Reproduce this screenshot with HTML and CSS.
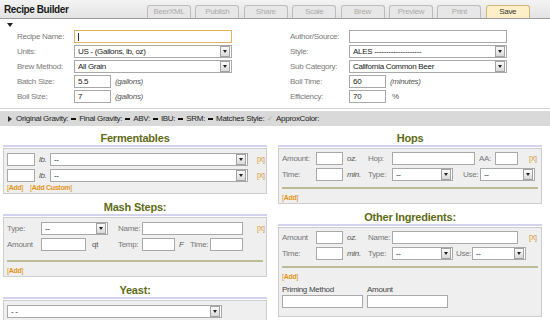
FILE: index.html
```html
<!DOCTYPE html>
<html lang="en">
<head>
    <meta charset="UTF-8">
    <title>Recipe Builder</title>
    <link rel="stylesheet" href="styles.css">
</head>
<body>
    <!-- Title bar and tabs -->
    <div class="topbar">
        <h1>Recipe Builder</h1>
        <ul class="tabs">
            <li>BeerXML</li>
            <li>Publish</li>
            <li>Share</li>
            <li>Scale</li>
            <li>Brew</li>
            <li>Preview</li>
            <li>Print</li>
            <li class="save">Save</li>
        </ul>
    </div>

    <!-- General recipe info -->
    <div class="general">
        <span class="toggle"></span>
        <div class="fields">
            <div class="col">
                <div class="row"><label>Recipe Name:</label><span class="fld wide focus"><span class="caret"></span></span></div>
                <div class="row"><label>Units:</label><div class="select wide"><span class="val">US - (Gallons, lb, oz)</span><span class="arrow"></span></div></div>
                <div class="row"><label>Brew Method:</label><div class="select wide"><span class="val">All Grain</span><span class="arrow"></span></div></div>
                <div class="row"><label>Batch Size:</label><span class="fld short">5.5</span><span class="unit">(gallons)</span></div>
                <div class="row"><label>Boil Size:</label><span class="fld short">7</span><span class="unit">(gallons)</span></div>
            </div>
            <div class="col right">
                <div class="row"><label>Author/Source:</label><span class="fld wide"></span></div>
                <div class="row"><label>Style:</label><div class="select wide"><span class="val">ALES --------------------</span><span class="arrow"></span></div></div>
                <div class="row"><label>Sub Category:</label><div class="select wide"><span class="val">California Common Beer</span><span class="arrow"></span></div></div>
                <div class="row"><label>Boil Time:</label><span class="fld short">60</span><span class="unit">(minutes)</span></div>
                <div class="row"><label>Efficiency:</label><span class="fld short">70</span><span class="unit plain">%</span></div>
            </div>
        </div>
    </div>

    <!-- Calculated stats -->
    <div class="stats">
        <span class="play"></span>
        Original Gravity: <span class="dash"></span>
        Final Gravity: <span class="dash"></span>
        ABV: <span class="dash"></span>
        IBU: <span class="dash"></span>
        SRM: <span class="dash"></span>
        Matches Style: <span class="check">&#10003;</span>
        ApproxColor:
    </div>

    <div class="sections">
        <div class="column">
            <div class="section">
                <h2>Fermentables</h2>
                <div class="box">
                    <div class="line">
                        <span class="fld w28"></span><span class="unit w15">lb.</span>
                        <div class="select w198"><span class="val">--</span><span class="arrow"></span></div>
                        <span class="del ml9">[X]</span>
                    </div>
                    <div class="line last">
                        <span class="fld w28"></span><span class="unit w15">lb.</span>
                        <div class="select w198"><span class="val">--</span><span class="arrow"></span></div>
                        <span class="del ml9">[X]</span>
                    </div>
                    <div class="actions"><a>[<b>Add</b>]</a><a>[<b>Add Custom</b>]</a></div>
                </div>
            </div>

            <div class="section">
                <h2>Mash Steps:</h2>
                <div class="box">
                    <div class="line">
                        <label class="w34">Type:</label>
                        <div class="select w67"><span class="val">--</span><span class="arrow"></span></div>
                        <label class="w24 ml10">Name:</label>
                        <span class="fld w101"></span>
                        <span class="del ml14">[X]</span>
                    </div>
                    <div class="line last">
                        <label class="w34">Amount</label>
                        <span class="fld w45"></span>
                        <span class="unit plain w32">qt</span>
                        <label class="w24">Temp:</label>
                        <span class="fld w33"></span>
                        <span class="unit w15">F</span>
                        <label class="w20">Time:</label>
                        <span class="fld w33"></span>
                    </div>
                    <div class="rule tall"></div>
                    <div class="actions"><a>[<b>Add</b>]</a></div>
                </div>
            </div>

            <div class="section">
                <h2>Yeast:</h2>
                <div class="box">
                    <div class="line">
                        <div class="select w215"><span class="val">- -</span><span class="arrow"></span></div>
                    </div>
                    <div class="line"></div>
                </div>
            </div>
        </div>

        <div class="column">
            <div class="section">
                <h2>Hops</h2>
                <div class="box tight">
                    <div class="line">
                        <label class="w34">Amount:</label>
                        <span class="fld w27"></span>
                        <span class="unit w25">oz.</span>
                        <label class="w24">Hop:</label>
                        <span class="fld w83"></span>
                        <label class="w20 pl4">AA:</label>
                        <span class="fld w23"></span>
                        <span class="del ml11">[X]</span>
                    </div>
                    <div class="line last">
                        <label class="w34">Time:</label>
                        <span class="fld w27"></span>
                        <span class="unit w25">min.</span>
                        <label class="w24">Type:</label>
                        <div class="select w61"><span class="val">--</span><span class="arrow"></span></div>
                        <label class="w27 pl10">Use:</label>
                        <div class="select w55"><span class="val">--</span><span class="arrow"></span></div>
                    </div>
                    <div class="rule"></div>
                    <div class="actions"><a>[<b>Add</b>]</a></div>
                </div>
            </div>

            <div class="section">
                <h2>Other Ingredients:</h2>
                <div class="box tight">
                    <div class="line">
                        <label class="w34">Amount</label>
                        <span class="fld w27"></span>
                        <span class="unit w25">oz.</span>
                        <label class="w24">Name:</label>
                        <span class="fld w126"></span>
                        <span class="del ml11">[X]</span>
                    </div>
                    <div class="line last">
                        <label class="w34">Time:</label>
                        <span class="fld w27"></span>
                        <span class="unit w25">min.</span>
                        <label class="w24">Type:</label>
                        <div class="select w61"><span class="val">--</span><span class="arrow"></span></div>
                        <label class="w19 pl3">Use:</label>
                        <div class="select w54"><span class="val">--</span><span class="arrow"></span></div>
                    </div>
                    <div class="rule"></div>
                    <div class="actions"><a>[<b>Add</b>]</a></div>
                    <div class="priming">
                        <div><div class="plabel">Priming Method</div><span class="fld w81"></span></div>
                        <div><div class="plabel">Amount</div><span class="fld w81"></span></div>
                    </div>
                </div>
            </div>
        </div>
    </div>
</body>
</html>
```

FILE: styles.css
```css
body {
    margin: 0;
    width: 550px;
    font-family: "Liberation Sans", Arial, sans-serif;
    font-size: 8px;
    letter-spacing: -0.3px;
    color: #333;
    background: #fff;
    overflow: hidden;
}

/* title bar */
.topbar {
    display: flex;
    align-items: flex-end;
    height: 19px;
    box-sizing: border-box;
    background: linear-gradient(#f3f3f3, #e3e3e3);
    border-bottom: 1px solid #9c9c9c;
}
h1 {
    margin: 0;
    padding-left: 4px;
    width: 143px;
    align-self: center;
    font-size: 10px;
    letter-spacing: -0.4px;
    font-weight: bold;
    color: #1a1a1a;
}
.tabs {
    display: flex;
    gap: 4.4px;
    list-style: none;
    margin: 0;
    padding: 0;
}
.tabs li {
    width: 44px;
    height: 13px;
    box-sizing: border-box;
    border: 1px solid #bdbdbd;
    border-bottom: none;
    border-radius: 3px 3px 0 0;
    background: #e7e7e7;
    color: #ababab;
    text-align: center;
    line-height: 12px;
}
.tabs li.save {
    background: #fdf0c9;
    border-color: #cfb47c;
    color: #333;
}

/* general info */
.general {
    padding-top: 4px;
    padding-bottom: 5px;
    border-bottom: 1px solid #d4d4d4;
}
.toggle {
    display: block;
    width: 0;
    height: 0;
    margin-left: 7px;
    border-left: 3px solid transparent;
    border-right: 3px solid transparent;
    border-top: 4px solid #222;
}
.fields {
    display: grid;
    grid-template-columns: 273px 1fr;
    padding-left: 17px;
    margin-top: 3px;
}
.row {
    display: flex;
    align-items: center;
    height: 13px;
    margin-bottom: 2px;
}
.row:last-child { margin-bottom: 0; }
.row label {
    width: 57px;
    color: #7a7a7a;
    white-space: nowrap;
}
.right .row label { width: 59px; }

.fld {
    display: inline-flex;
    align-items: center;
    height: 13px;
    box-sizing: border-box;
    border: 1px solid #a9a9a9;
    background: #fff;
    padding: 0 3px;
    color: #222;
    flex: none;
}
.fld.focus { border-color: #e2b35a; }
.caret {
    width: 1px;
    height: 8px;
    background: #333;
}
.wide { width: 158px; }
.short { width: 37px; }
.unit {
    font-style: italic;
    color: #555;
    padding-left: 4px;
    flex: none;
}
.unit.plain { font-style: normal; padding-left: 6px; }

.select {
    display: flex;
    align-items: center;
    height: 13px;
    box-sizing: border-box;
    border: 1px solid #a9a9a9;
    background: #fff;
    padding: 0 1px 0 3px;
    color: #222;
    flex: none;
}
.select .val {
    flex: 1;
    white-space: nowrap;
    overflow: hidden;
}
.arrow {
    display: flex;
    align-items: center;
    justify-content: center;
    width: 8px;
    height: 9px;
    border: 1px solid #a2a2a2;
    background: linear-gradient(#fbfbfb, #d9d9d9);
}
.arrow::before {
    content: "";
    border-left: 2px solid transparent;
    border-right: 2px solid transparent;
    border-top: 3px solid #222;
}

/* stats bar */
.stats {
    display: flex;
    align-items: center;
    gap: 3px;
    height: 15px;
    margin-top: 2px;
    padding-left: 8px;
    background: #d9d9d9;
    color: #222;
    white-space: nowrap;
}
.play {
    border-top: 3px solid transparent;
    border-bottom: 3px solid transparent;
    border-left: 4px solid #333;
    margin-right: 1px;
}
.dash {
    display: inline-block;
    width: 5px;
    height: 2px;
    background: #111;
}
.check { color: #aaa; font-size: 7px; }

/* ingredient sections */
.sections {
    display: grid;
    grid-template-columns: 264px 264px;
    column-gap: 11px;
    align-items: start;
    padding: 5px 0 0 3px;
}
.section { margin-bottom: 6px; }
h2 {
    margin: 0 0 1px;
    font-size: 11px;
    letter-spacing: -0.2px;
    line-height: 14px;
    font-weight: bold;
    text-align: center;
    color: #5f6c14;
    border-bottom: 2px solid #d3d3ee;
}
.box {
    background: #efefef;
    border: 1px solid #cdcdcd;
    padding: 4px 3px 1px;
}
.box.tight { padding-top: 3px; }
.line {
    display: flex;
    align-items: center;
    height: 13px;
    margin-bottom: 3px;
}
.line.last { margin-bottom: 1px; }
.line label {
    color: #777;
    flex: none;
    white-space: nowrap;
}
.del {
    color: #d8922a;
    font-size: 7px;
}
.rule {
    height: 2px;
    background: #bdba95;
    margin: 6px 0 4px;
}
.rule.tall { margin-top: 9px; }
.actions {
    display: flex;
    gap: 7px;
    height: 9px;
    line-height: 9px;
    font-size: 7px;
    color: #e3951b;
}
.actions b { font-weight: bold; }
.priming {
    display: flex;
    gap: 4px;
    margin-top: 4px;
    padding-bottom: 5px;
}
.plabel {
    color: #444;
    height: 10px;
    line-height: 10px;
}

/* widths used by the entry rows */
.w15 { width: 15px; box-sizing: border-box; }
.w17 { width: 17px; box-sizing: border-box; }
.w18 { width: 18px; }
.w19 { width: 19px; box-sizing: border-box; }
.w20 { width: 20px; box-sizing: border-box; }
.w23 { width: 23px; }
.w24 { width: 24px; }
.w25 { width: 25px; box-sizing: border-box; }
.w27 { width: 27px; box-sizing: border-box; }
.w28 { width: 28px; }
.w32 { width: 32px; box-sizing: border-box; }
.w33 { width: 33px; }
.w34 { width: 34px; }
.w45 { width: 45px; }
.w54 { width: 54px; }
.w55 { width: 55px; }
.w61 { width: 61px; }
.w67 { width: 67px; }
.w81 { width: 81px; }
.w83 { width: 83px; }
.w101 { width: 101px; }
.w126 { width: 126px; }
.w198 { width: 198px; }
.w215 { width: 215px; }
.ml9 { margin-left: 9px; }
.ml10 { margin-left: 10px; }
.ml11 { margin-left: 11px; }
.ml14 { margin-left: 14px; }
.pl3 { padding-left: 3px; }
.pl4 { padding-left: 4px; }
.pl10 { padding-left: 10px; }
```
